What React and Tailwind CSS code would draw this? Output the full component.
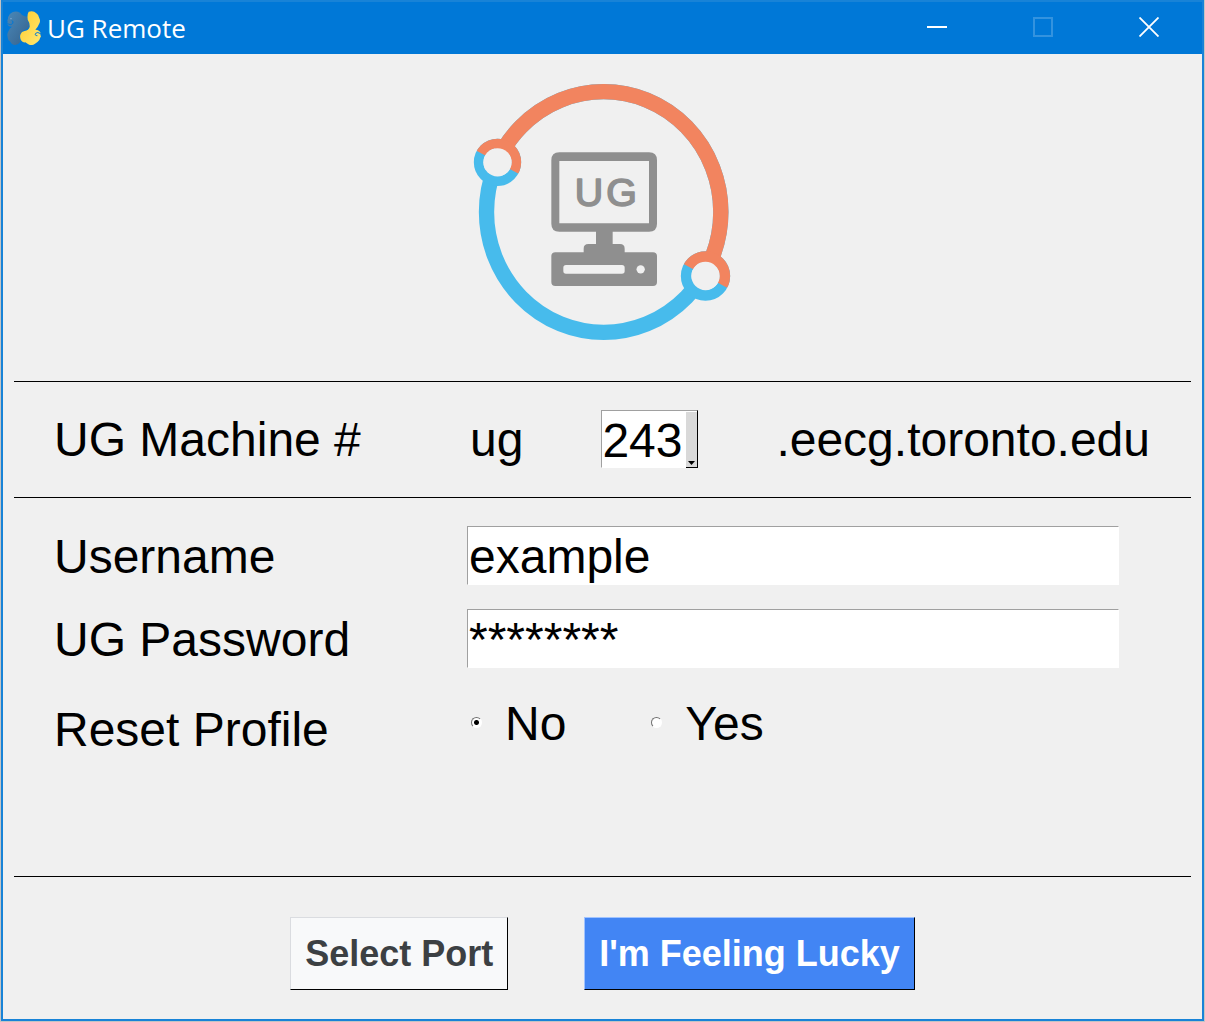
import React, { useState } from "react";

function SnakesIcon() {
  return (
    <svg viewBox="21 29 102 102" className="size-[34px] shrink-0" aria-hidden="true">
      <defs>
        <linearGradient id="snake-blue" x1="0" y1="0" x2="1" y2="1">
          <stop offset="0" stopColor="#4a88b8" />
          <stop offset="1" stopColor="#35618c" />
        </linearGradient>
        <linearGradient id="snake-yellow" x1="0" y1="0" x2="1" y2="1">
          <stop offset="0" stopColor="#ffcb2b" />
          <stop offset="1" stopColor="#ffe873" />
        </linearGradient>
      </defs>
      <path
        fill="url(#snake-blue)"
        d="M37 33Q49 28 60 34L66 41L74 45L82 46L81 54Q88 66 87 76Q82 85 71 87Q59 95 59 109L61 122Q55 130 46 131Q34 129 31 121Q22 116 23 106Q20 98 26 88Q29 81 36 76Q22 76 22 65Q24 62 22 56Q25 53 24 48Q29 36 37 33Z"
      />
      <path d="M23 67Q33 73 38 66Q42 60 36 58" fill="none" stroke="#0078d7" strokeWidth="3" strokeLinecap="round" />
      <circle cx="33" cy="52" r="2" fill="#8db6dc" />
      <path
        fill="url(#snake-yellow)"
        d="M86 31Q101 27 109 36Q117 41 118 51Q123 60 116 70Q113 78 106 85Q119 85 122 96Q120 101 123 105Q120 110 118 116Q112 124 104 128Q94 134 85 129L76 123Q68 125 63 117Q58 106 62 98Q64 91 74 89Q86 87 89 77Q90 65 83 55Q81 39 86 31Z"
      />
      <path d="M122 97Q112 90 107 96Q103 103 111 103" fill="none" stroke="#0078d7" strokeWidth="3" strokeLinecap="round" />
    </svg>
  );
}

function Rings() {
  return (
    <>
      <ellipse cx="431" cy="411" rx="351.5" ry="361" strokeWidth="46" />
      <circle cx="112.5" cy="262" r="56.5" strokeWidth="29" />
      <circle cx="736.5" cy="603" r="58" strokeWidth="32" />
    </>
  );
}

function Logo() {
  return (
    <svg viewBox="45 27 768 768" className="size-64" role="img" aria-label="UG Remote logo" overflow="visible">
      <defs>
        <clipPath id="upper-half">
          <path d="M-70 162L920 703V-60H-70Z" />
        </clipPath>
      </defs>
      <g stroke="#47bbec" fill="none">
        <Rings />
      </g>
      <g stroke="#f2845f" fill="none" clipPath="url(#upper-half)">
        <Rings />
      </g>
      <g fill="#f0f0f0">
        <circle cx="112.5" cy="262" r="42.5" />
        <circle cx="736.5" cy="603" r="42.5" />
      </g>
      <g fill="#8f8f8f">
        <path
          fillRule="evenodd"
          d="M298 232H567Q591 232 591 256V446Q591 470 567 470H458V507H480Q494 507 494 521V532H579Q591 532 591 544V621Q591 633 579 633H286Q274 633 274 621V544Q274 532 286 532H371V521Q371 507 385 507H408V470H298Q274 470 274 446V256Q274 232 298 232ZM298 258V445H567V258ZM318 570Q310 570 310 578V588Q310 596 318 596H486Q494 596 494 588V578Q494 570 486 570Z"
        />
        <circle cx="542" cy="583" r="12.5" fill="#f0f0f0" />
        <g
          textAnchor="middle"
          fontFamily='"Liberation Sans", Arial, sans-serif'
          fontSize="118"
          stroke="#8f8f8f"
          strokeWidth="5"
          strokeLinejoin="round"
        >
          <text x="387" y="393">U</text>
          <text x="485" y="393">G</text>
        </g>
      </g>
    </svg>
  );
}

function TitleBar() {
  return (
    <header className="flex h-[52px] items-center bg-[#0078d7] pl-1 text-white">
      <SnakesIcon />
      <h1 className="flex-1 pl-[6px] font-['Open_Sans','Noto_Sans',sans-serif] text-[26px] leading-8 font-normal">
        UG Remote
      </h1>
      <button type="button" aria-label="Minimize" className="flex h-full w-[106px] items-center justify-center pb-0.5">
        <svg viewBox="0 0 20 20" className="size-5" aria-hidden="true">
          <path d="M0 10H20" stroke="#ffffff" strokeWidth="2" />
        </svg>
      </button>
      <button type="button" disabled aria-label="Maximize" className="flex h-full w-[106px] items-center justify-center pb-0.5">
        <svg viewBox="0 0 20 20" className="size-5" aria-hidden="true">
          <path d="M1 1H19V19H1Z" fill="none" stroke="#3393df" strokeWidth="2" />
        </svg>
      </button>
      <button type="button" aria-label="Close" className="flex h-full w-[106px] items-center justify-center pb-0.5">
        <svg viewBox="0 0 20 20" className="size-5" aria-hidden="true">
          <path d="M0.500 0.500L19.500 19.500M19.500 0.500L0.500 19.500" stroke="#ffffff" strokeWidth="1.800" />
        </svg>
      </button>
    </header>
  );
}

function MachineSelect() {
  return (
    <div className="relative">
      <select
        id="machine"
        defaultValue="243"
        className="block h-[58px] w-[97px] appearance-none border border-[#a0a0a0] border-r-black border-b-white bg-white pt-0.5 leading-[56px] outline-none"
      >
        <option>243</option>
        <option>244</option>
        <option>245</option>
      </select>
      <span className="pointer-events-none absolute top-0.5 right-0 bottom-0 flex w-3 items-end justify-center border-r border-b border-black bg-[#d9d9d9] pb-0.5">
        <svg viewBox="0 0 7 4" className="h-1 w-[7px]" aria-hidden="true">
          <path d="M0 0H7L3.500 4Z" fill="#000000" />
        </svg>
      </span>
    </div>
  );
}

function TextField({ id, label, initial }) {
  const [value, setValue] = useState(initial);
  return (
    <div className="flex items-center">
      <label htmlFor={id} className="w-[413px] shrink-0 pt-0.5">
        {label}
      </label>
      <input
        id={id}
        type="text"
        autoComplete="off"
        value={value}
        onChange={(e) => setValue(e.target.value)}
        className="mr-[72px] h-[59px] min-w-0 flex-1 border border-white border-t-[#a0a0a0] border-l-[#a0a0a0] bg-white px-px pt-px outline-none"
      />
    </div>
  );
}

function Radio({ label, value, defaultChecked }) {
  return (
    <label className="flex items-start gap-[23px]">
      <input
        type="radio"
        name="reset"
        value={value}
        defaultChecked={defaultChecked}
        className="mt-[21px] size-[11px] appearance-none rounded-full border border-white border-t-[#707070] border-l-[#707070] bg-white checked:bg-[radial-gradient(circle,#000_2px,#fff_3px)]"
      />
      {label}
    </label>
  );
}

export default function App() {
  return (
    <div className="min-h-screen bg-[#c4c4c4] px-px pb-px">
      <main className="flex min-h-[calc(100vh-1px)] flex-col border-2 border-[#1883d7] bg-[#f0f0f0] font-['Liberation_Sans',Arial,sans-serif] text-5xl leading-[56px] text-black">
        <TitleBar />
        <form className="flex flex-1 flex-col px-[11px]" onSubmit={(e) => e.preventDefault()}>
          <div className="flex justify-center border-b border-black pt-[30px] pb-[41px]">
            <Logo />
          </div>

          <div className="flex items-center border-b border-black pt-7 pb-[29px] pl-10">
            <label htmlFor="machine" className="w-[413px] shrink-0 pt-0.5">
              UG Machine #
            </label>
            <div className="flex items-center gap-[78px] pl-[3px]">
              <span className="pt-0.5">ug</span>
              <MachineSelect />
              <span className="pt-0.5">.eecg.toronto.edu</span>
            </div>
          </div>

          <div className="flex flex-1 flex-col gap-6 border-b border-black pt-7 pl-10">
            <TextField id="username" label="Username" initial="example" />
            <TextField id="password" label="UG Password" initial="********" />
            <div role="radiogroup" aria-labelledby="reset-label" className="flex items-start">
              <span id="reset-label" className="w-[413px] shrink-0 pt-2.5">
                Reset Profile
              </span>
              <div className="flex gap-[85px] pt-1 pl-1">
                <Radio label="No" value="no" defaultChecked />
                <Radio label="Yes" value="yes" />
              </div>
            </div>
          </div>

          <div className="flex justify-center gap-[76px] pt-10 pb-[29px] text-4xl leading-[39px] font-bold">
            <button
              type="button"
              className="border border-[#dadce0] border-r-black border-b-black bg-[#f8f9fa] px-3.5 py-4 leading-[39px] text-[#3c4043]"
            >
              Select Port
            </button>
            <button
              type="submit"
              className="border border-[#a0c3ff] border-r-black border-b-black bg-[#4285f4] px-3.5 py-4 leading-[39px] text-white"
            >
              I'm Feeling Lucky
            </button>
          </div>
        </form>
      </main>
    </div>
  );
}
